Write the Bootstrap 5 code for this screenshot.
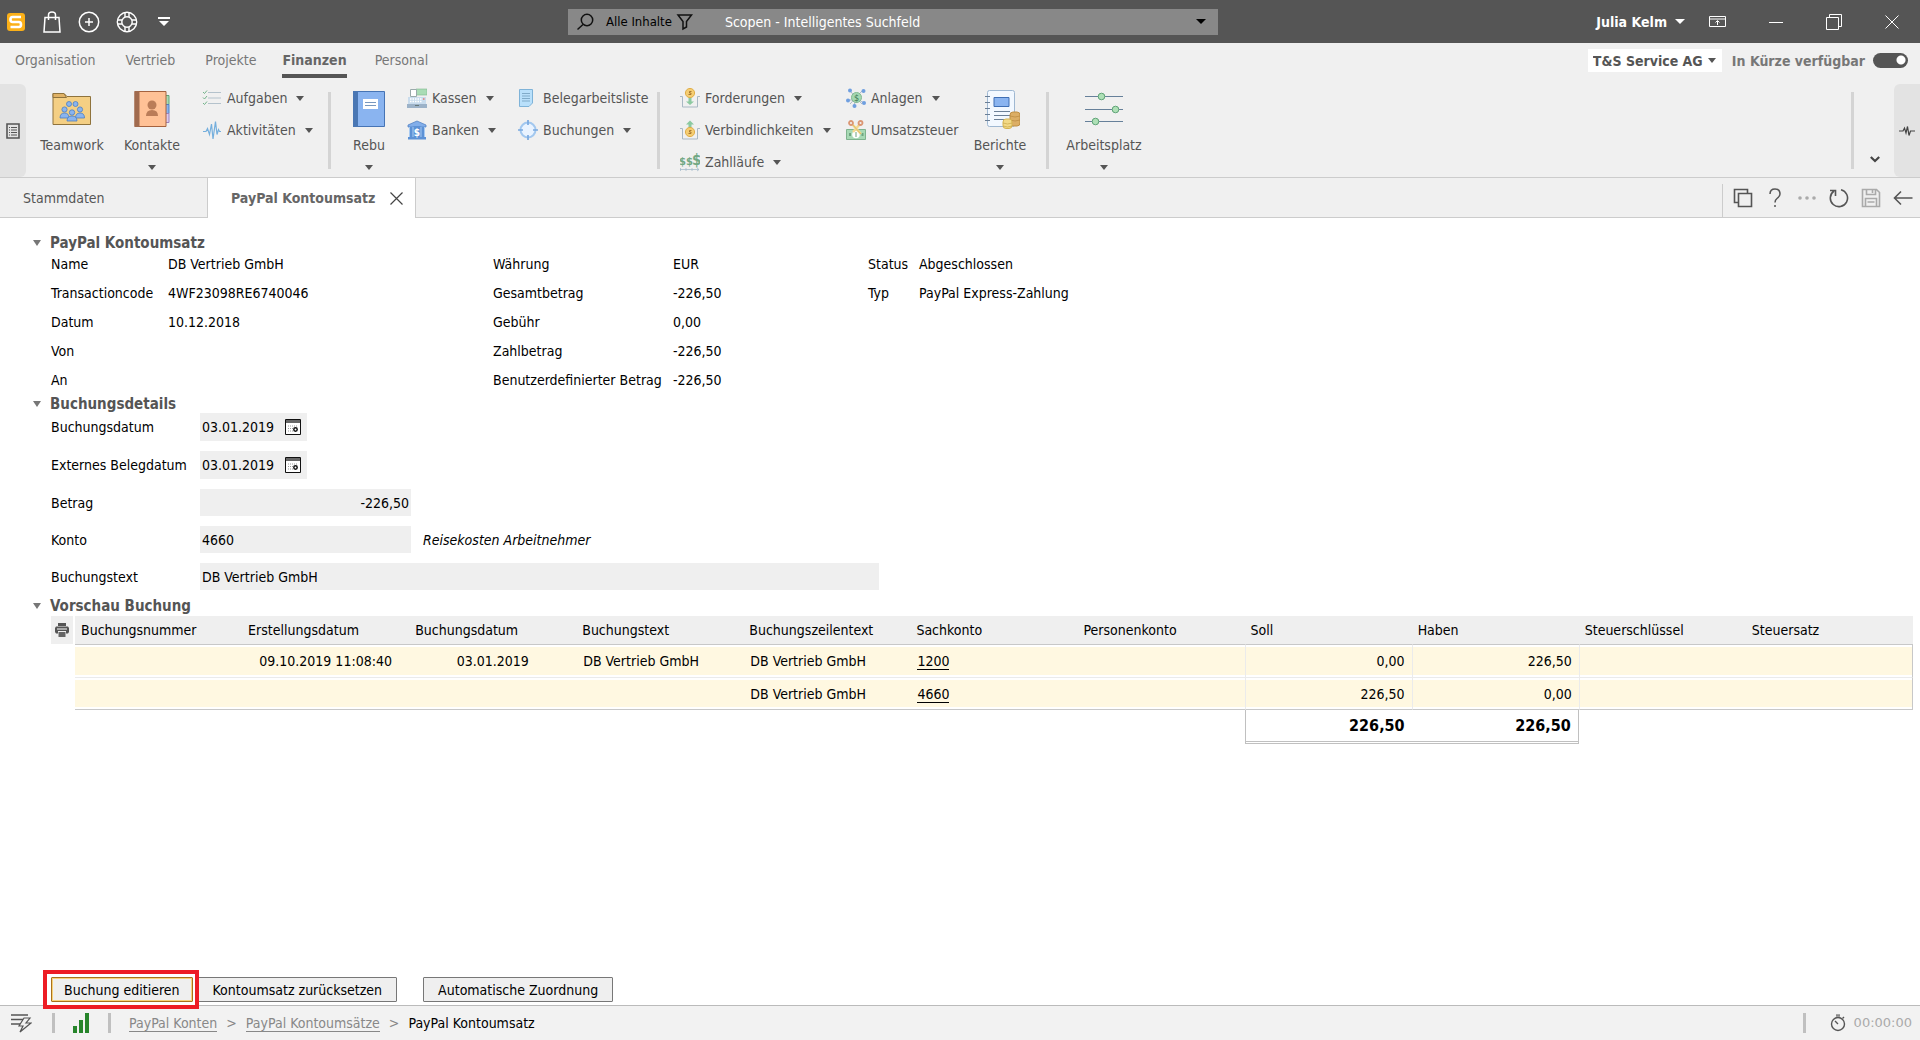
<!DOCTYPE html>
<html lang="de">
<head>
<meta charset="utf-8">
<meta name="viewport" content="width=device-width, initial-scale=1">
<title>PayPal Kontoumsatz</title>
<link href="https://cdn.jsdelivr.net/npm/bootstrap@5.3.0/dist/css/bootstrap.min.css" rel="stylesheet">
<style>
body{font-family:"DejaVu Sans Condensed","Noto Sans",sans-serif;font-size:14px;line-height:20px;color:#000;background:#fff}
button,input,select{font:inherit;color:inherit;border:0;background:none;padding:0}
svg{display:block;flex:none}
.bare{display:flex;align-items:center;justify-content:center}
.tri{width:0;height:0;border:4px solid transparent;border-top:5px solid currentColor;border-bottom:0;flex:none}
.titlebar{height:43px;background:#555;color:#fff}
.titlebar .tri{border-width:5px 5px 0}
.quick{gap:16px;padding-left:6px;flex:0 1 568px}
.search{width:650px;height:26px;background:#888;color:#000}
.search button{font-size:13px}
.search input::placeholder{color:#fff;opacity:1}
.search input{outline:0;margin-left:31px}
.wintools{flex:1 1 0;gap:43px;padding-right:21px}
.ribbon-area{background:#f0f0f0;color:#555}
.menurow{height:41px}
.menurow .nav{gap:30px;padding-left:15px}
.menurow .nav-link{padding:7px 0 0;height:35px;color:#777}
.menurow .nav-link.active{color:#666;font-weight:700;border-bottom:4px solid #555;margin:0 -2px 0 -4px}
.orgbox{padding-top:6px}
.company{background:#fff;height:23px;padding-left:5px;width:134px}
.company select{appearance:none;font-weight:700;width:115px;outline:0}
.soon{color:#777;font-weight:700;margin-left:10px}
.soon input{appearance:none;width:35px;height:15px;border-radius:8px;background:radial-gradient(circle at 28px 7px,#fff 4px,#555 5px);margin:0 12px 0 8px}
.ribbon{height:93px}
.sidegrip{width:26px;background:#e3e3e3;border-radius:0 6px 6px 0}
.sidegrip.end{border-radius:6px 0 0 6px}
.bigbtn{width:76px;display:flex;flex-direction:column;align-items:center;padding-top:5px;white-space:nowrap}
.bigbtn svg{margin-bottom:6px}
.bigbtn .tri{margin-top:10px}
.bigbtn.wide{width:84px}.bigbtn.widest{width:110px}
.smallcol{display:flex;flex-direction:column;gap:4px;flex:none}
.smallcol button{height:28px;display:flex;align-items:center;gap:5px;white-space:nowrap}
.smallcol .tri{margin-left:4px}
.vsep{width:3px;height:77px;margin-top:8px;background:#d4d4d4;flex:none}
.w-a{width:130px}.w-b{width:111px}.w-c{width:139px}.w-d{width:166px}.w-e{width:116px}
.expander{margin:0 14px 12px 16px}
.tabrow{height:41px;border-top:1px solid #ccc;border-bottom:1px solid #ccc}
.doctab{width:208px;color:#555;padding-left:23px;text-align:left;border-right:1px solid #ccc}
.doctab.open{background:#fff;margin-bottom:-1px;color:#666;font-weight:700}
.tabtools{border-left:1px solid #ccc;margin-top:6px;padding:0 7px 6px 10px;gap:12px}
.content{padding:15px 7px 0 33px}
.sect{height:16px;padding-top:4px;color:#555;font-weight:700;gap:8px;display:flex;align-items:center;font-size:15px}
.sect .tri{border-width:6px 4px 0;color:#777;margin-right:1px}
.facts{padding-left:18px}
.facts dl{display:grid;grid-auto-rows:29px;align-items:center;margin:0}
.facts dt{font-weight:400}.facts dd{margin:0}
.f1{grid-template-columns:117px 325px}.f2{grid-template-columns:180px 195px}.f3{grid-template-columns:51px auto}
.form-lines{padding:3px 0 6px 18px;display:flex;flex-direction:column;gap:10px}
.form-lines>div{display:flex;align-items:center}
.form-lines label{width:149px}
.form-lines input{background:#efefef;height:27px;padding:0 2px;outline:0}
.datebox{background:#efefef;width:107px;height:28px;display:flex;align-items:center;justify-content:space-between;padding-right:6px}
.form-lines .datebox input{width:83px}
.w-amt{width:211px}.w-txt{width:679px}
.printcell{width:22px;height:28px;background:#efefef;margin-right:2px}
.booktable{table-layout:fixed;width:100%;border-collapse:separate;border-spacing:0}
.booktable th{background:#efefef;font-weight:400;height:28px;padding:0 6px}
.booktable td{padding:0 7px}
.booktable tbody td{height:33px;border-top:1px solid #ebebeb;box-shadow:inset 0 2px #fff,inset 0 -2px #fff;background:#fff8e1}
.booktable tbody tr:first-child td{border-top-color:#c8c8c8}
.booktable tbody tr:last-child td{border-bottom:1px solid #c8c8c8}
.booktable tbody td:last-child{border-right:1px solid #c8c8c8}
.booktable tbody .sum,.booktable tbody .sum+.sum+td{border-left:1px solid #ebebeb}
.booktable tfoot .sum{height:34px;font-size:16px;font-weight:700;border-bottom:3px double #c0c0c0}
.booktable tfoot .sum:not(.sum+.sum){border-left:1px solid #c0c0c0}
.booktable tfoot .sum+.sum{border-right:1px solid #c0c0c0}
.booktable a{color:#000;text-decoration:none;border-bottom:1px solid #000}
.actions{padding:0 51px 3px;gap:2px}
.actions button{height:25px;padding:0 14px;border:1px solid #777;background:#efefef;border-radius:1px}
.marked{outline:4px solid #ed1c24;padding:3px 2px 3px 4px;margin:-3px 1px -3px -4px;position:relative}
.actions .marked button{padding:0 12px;border-color:#a9711c;box-shadow:inset 0 0 0 1px #f7d27a}
.statusbar{height:35px;border-top:1px solid #bbb;background:#f2f2f2;color:#888}
.statusbar a{color:#888;text-decoration:none;border-bottom:1px solid #888;line-height:16px}
.barsep{width:3px;height:20px;background:#c0c0c0}
.crumbs{gap:9px;margin-left:18px}
.clock{font-family:"DejaVu Sans",sans-serif;font-size:13px;color:#aaa}
</style>
</head>
<body class="d-flex flex-column min-vh-100">
<header>
<div class="titlebar d-flex align-items-center">
  <div class="quick d-flex align-items-center">
    <svg width="20" height="20" viewBox="0 0 20 20"><rect x="1" y="1" width="18" height="18" rx="3" fill="#fbb018"/><path d="M15 5H6.500Q4.500 5 4.500 7.500T6.500 10H13q2 0 2 2.500T13 15H4.500" fill="none" stroke="#fff" stroke-width="2.600"/></svg>
    <button class="bare" aria-label="Shop"><svg width="20" height="22" viewBox="0 0 20 22" fill="none" stroke="#fff" stroke-width="1.500"><path d="M3 6.500h14l1 14.500H2zM6.500 9V4q0-3 3.500-3t3.500 3v5"/></svg></button>
    <button class="bare" aria-label="Neu"><svg width="22" height="22" viewBox="0 0 22 22" fill="none" stroke="#fff" stroke-width="1.500"><circle cx="11" cy="11" r="9.700"/><path d="M11 7v8M7 11h8"/></svg></button>
    <button class="bare" aria-label="Hilfe"><svg width="22" height="22" viewBox="0 0 22 22" fill="none" stroke="#fff" stroke-width="1.400"><circle cx="11" cy="11" r="9.700"/><circle cx="11" cy="11" r="5.200"/><path d="M9 1.500v4.500m4-4.500v4.500M9 16v4.500m4-4.500v4.500M1.500 9H6m-4.500 4H6M16 9h4.500M16 13h4.500"/></svg></button>
    <button class="bare" aria-label="Mehr"><svg width="20" height="12" viewBox="0 0 20 12" fill="#fff"><path d="M4 1h12v2H4zM5 5h10l-5 5z"/></svg></button>
  </div>
  <div class="search d-flex align-items-center">
    <svg class="ms-2" width="18" height="18" viewBox="0 0 18 18" fill="none" stroke="#111" stroke-width="1.500"><circle cx="11" cy="7" r="5.700"/><path d="M7 11.500L1.500 16.500"/></svg>
    <button class="bare ms-2 ps-1">Alle Inhalte<svg class="ms-1" width="18" height="18" viewBox="0 0 18 18" fill="none" stroke="#111" stroke-width="1.500"><path d="M2 2h13.500L10.500 8.500V14L7 16V8.500z"/></svg></button>
    <input class="flex-grow-1" type="text" placeholder="Scopen - Intelligentes Suchfeld" aria-label="Suche">
    <button class="bare me-2 pe-1" aria-label="Suchverlauf"><span class="tri"></span></button>
  </div>
  <div class="wintools d-flex align-items-center justify-content-end">
    <div class="d-flex align-items-center">
      <button class="bare fw-bold gap-2">Julia Kelm <span class="tri"></span></button>
      <button class="bare ms-4" aria-label="Menüband"><svg width="17" height="12" viewBox="0 0 17 12" fill="none" stroke="#fff" stroke-width="1"><path d="M.5.5h16v10H.5zM.5 3h16M8.500 9V5M6.500 6.500l2-2 2 2"/></svg></button>
    </div>
    <button class="bare" aria-label="Minimieren"><svg width="14" height="14" viewBox="0 0 14 14"><path d="M0 7.500h14" stroke="#fff"/></svg></button>
    <button class="bare" aria-label="Wiederherstellen"><svg width="16" height="16" viewBox="0 0 16 16" fill="none" stroke="#fff"><path d="M.5 3.500h12v12H.5zM3.500 3.500v-3h12v12h-3"/></svg></button>
    <button class="bare" aria-label="Schließen"><svg width="14" height="14" viewBox="0 0 14 14"><path d="M.5.5l13 13m0-13l-13 13" stroke="#fff"/></svg></button>
  </div>
</div>
<div class="ribbon-area">
  <div class="menurow d-flex">
    <nav class="nav flex-grow-1">
      <a class="nav-link" href="#">Organisation</a><a class="nav-link" href="#">Vertrieb</a><a class="nav-link" href="#">Projekte</a><a class="nav-link active" href="#">Finanzen</a><a class="nav-link" href="#">Personal</a>
    </nav>
    <div class="orgbox d-flex align-items-center align-self-start">
      <div class="company d-flex align-items-center"><select aria-label="Firma"><option>T&amp;S Service AG</option></select><span class="tri"></span></div>
      <label class="soon d-flex align-items-center">In Kürze verfügbar <input type="checkbox" role="switch" checked></label>
    </div>
  </div>
  <div class="ribbon d-flex">
    <button class="sidegrip bare me-1" aria-label="Navigation"><svg width="14" height="16" viewBox="0 0 14 16" fill="none" stroke="#555"><path d="M1 1h12v14H1z" stroke-width="1.600"/><path d="M5 4.500h6M5 7h6M5 9.500h6M5 12h6"/><path d="M3 4.500h1M3 7h1M3 9.500h1M3 12h1" /></svg></button>
    <button class="bigbtn wide"><svg width="40" height="40" viewBox="0 0 40 40"><path d="M1 4.500h11l3 3h23.500v28H1z" fill="#f4cf84" stroke="#8f733c"/><path d="M1 4.500h11l2.500 4H1z" fill="#e0b266" stroke="#8f733c"/><g fill="#8ab4ee" stroke="#4d7fc0" stroke-width=".8"><circle cx="17" cy="15" r="2.500"/><circle cx="23.500" cy="15" r="2.500"/><circle cx="12.500" cy="20.500" r="2.600"/><circle cx="28" cy="20.500" r="2.600"/><path d="M8 29q0-5 4.500-5t4.500 5zM23.500 29q0-5 4.500-5t4.500 5z"/><circle cx="20" cy="23.500" r="2.700"/><path d="M15 32q0-5 5-5t5 5z"/></g></svg>Teamwork</button>
    <button class="bigbtn"><svg width="40" height="40" viewBox="0 0 40 40"><path d="M33 6.500h4v9h-4z" fill="#a9dcb5" stroke="#5fa377"/><path d="M33 15.500h4v9h-4z" fill="#8ab4ee" stroke="#4d7fc0"/><path d="M33 24.500h4v9h-4z" fill="#dccbf0" stroke="#9a80bb"/><path d="M3 2.500h31v35H3z" fill="#ffc196" stroke="#a5623f"/><path d="M2.500 2h5v36h-5z" fill="#a06a4e"/><circle cx="20" cy="16" r="4.500" fill="#ba7c58"/><path d="M14 27q0-6 6-6t6 6z" fill="#ba7c58"/></svg>Kontakte<span class="tri"></span></button>
    <div class="smallcol w-a ms-2 ps-1">
      <button><svg width="20" height="20" viewBox="0 0 20 20" fill="none"><path d="M6 4.500h13M6 10h13M6 15.500h13" stroke="#b4c2cc"/><path d="M1 4l1.500 1.500L5 2.500M1 9.500L2.500 11 5 8M1 15l1.500 1.500L5 13.500" stroke="#73b38a"/></svg>Aufgaben <span class="tri"></span></button>
      <button><svg width="20" height="20" viewBox="0 0 20 20" fill="none" stroke="#75afdd" stroke-width="1.200"><path d="M1 11.500h3l1.500-3 2 6L9.500 4l1.500 15L13.500 1.500l1.500 13 1.500-5 1 2H19"/></svg>Aktivitäten <span class="tri"></span></button>
    </div>
    <div class="vsep"></div>
    <button class="bigbtn"><svg width="40" height="40" viewBox="0 0 40 40"><path d="M4.500 2.500h31v35h-31z" fill="#8ab4f0" stroke="#4674b5"/><path d="M4 2h5v36H4z" fill="#4a77b4"/><path d="M14 10h15v10H14z" fill="#fff"/><path d="M16 13.500h11M16 16.500h11" stroke="#7898bf"/></svg>Rebu<span class="tri"></span></button>
    <div class="smallcol w-b">
      <button><svg width="20" height="20" viewBox="0 0 20 20"><path d="M9 1h11v6H9z" fill="#a9dcb5" stroke="#7fb98e" stroke-width=".6"/><path d="M1 9h18v10H1z" fill="#c9dced"/><path d="M0 16h20v4H0z" fill="#9cb2c8"/><path d="M3.500 1.500h6v7h-6z" fill="#fff" stroke="#9aa"/><path d="M3 11h12M3 13.500h12" stroke="#fff" stroke-width="1.500" stroke-dasharray="1.500 1"/><path d="M16 11h1.500" stroke="#e5766d" stroke-width="1.500"/><path d="M8 17.500h4" stroke="#677"/></svg>Kassen <span class="tri"></span></button>
      <button><svg width="20" height="20" viewBox="0 0 20 20"><path d="M1 5l9-4 9 4v2H1z" fill="#82aeea" stroke="#5483c4" stroke-width=".8"/><path d="M2 7h16v10H2z" fill="#a9cbf2"/><path d="M3 7h2.500v10H3zM14.500 7H17v10h-2.500zM1 17h18v2.500H1zM6.500 6h7v12h-7z" fill="#5d92d6"/><text x="10" y="16" font-size="10" fill="#fff" text-anchor="middle" font-weight="bold">$</text></svg>Banken <span class="tri"></span></button>
    </div>
    <div class="smallcol w-c">
      <button><svg width="20" height="20" viewBox="0 0 20 20"><path d="M1.500 1.500h13V15L11 18.500H1.500z" fill="#b9e0fb" stroke="#7fb3d8"/><path d="M4 5.500h8M4 8h8M4 10.500h8M4 13h8" stroke="#80abc9"/></svg>Belegarbeitsliste</button>
      <button><svg width="20" height="20" viewBox="0 0 20 20" fill="none" stroke="#79a9e0"><circle cx="10" cy="10" r="7.500" fill="#e9f3ff" stroke="#a3c8ef" stroke-width="2"/><path d="M10 0v5M10 15v5M0 10h5M15 10h5" stroke-width="1.700"/></svg>Buchungen <span class="tri"></span></button>
    </div>
    <div class="vsep me-3"></div>
    <div class="smallcol w-d ms-1">
      <button><svg width="20" height="20" viewBox="0 0 20 20"><path d="M0 8.500h2.500v10.500h15V8.500H20" fill="none" stroke="#a9b8c4"/><path d="M8.500 9h3v4.500H14L10 17l-4-3.500h2.500z" fill="#8cc9a0"/><circle cx="10" cy="5" r="4.600" fill="#f5cd72" stroke="#e0ae48"/><path d="M11.500 3.500H9.500v1.500h1.500v1.500H8.500" fill="none" stroke="#a06f28" stroke-width=".9"/></svg>Forderungen <span class="tri"></span></button>
      <button><svg width="20" height="20" viewBox="0 0 20 20"><path d="M0 8.500h2.500v10.500h15V8.500H20" fill="none" stroke="#a9b8c4"/><path d="M8.500 8V4.500H6L10 .5l4 4h-2.500V8z" fill="#8cc9a0"/><circle cx="10" cy="12" r="4.600" fill="#f5cd72" stroke="#e0ae48"/><path d="M11.500 10.500H9.500V12h1.500v1.500H8.500" fill="none" stroke="#a06f28" stroke-width=".9"/></svg>Verbindlichkeiten <span class="tri"></span></button>
      <button><svg width="20" height="20" viewBox="0 0 20 20"><g fill="#72a884" font-weight="bold"><text x="-1" y="13" font-size="11">$$</text><text x="12" y="13" font-size="15">$</text></g><path d="M0 17.500h19M.5 16v3M6 16v3M12 16v3M17 16l2 1.500-2 1.500" stroke="#a7bccb" fill="none" stroke-width=".8"/></svg>Zahlläufe <span class="tri"></span></button>
    </div>
    <div class="smallcol w-e">
      <button><svg width="20" height="20" viewBox="0 0 20 20"><path d="M4 3l12 13M16 3L4 16M2 12h6M10 10l-2 8M10 10l8 5" stroke="#9ab" stroke-width=".8"/><g fill="#6f9fe0"><circle cx="4" cy="2.500" r="2"/><circle cx="17.500" cy="3" r="2"/><circle cx="2" cy="12.500" r="2"/><circle cx="8.500" cy="18" r="2"/><circle cx="18" cy="15" r="2"/></g><circle cx="10.500" cy="9.500" r="5" fill="#a5d8b2" stroke="#82b991"/><text x="10.500" y="13" text-anchor="middle" font-size="9" fill="#3e7a54">$</text></svg>Anlagen <span class="tri"></span></button>
      <button><svg width="20" height="20" viewBox="0 0 20 20"><path d="M.5 9.500h19v10H.5z" fill="#a7d9b4" stroke="#7fb38e"/><circle cx="10" cy="14.500" r="3.800" fill="#fff"/><path d="M3 13h2v3H3zM15.500 13h2v3h-2zM9.500 12h1v5h-1z" fill="#6fa480"/><path d="M6 4l9 10M14 4L7 12" stroke="#f3d890" stroke-width="2.500"/><path d="M6 4l9 10" stroke="#cfa74f" stroke-width=".6"/><g fill="none" stroke="#db9673" stroke-width="1.800"><circle cx="5" cy="3" r="2"/><circle cx="14.500" cy="3" r="2"/></g></svg>Umsatzsteuer</button>
    </div>
    <button class="bigbtn me-2"><svg width="40" height="40" viewBox="0 0 40 40"><rect x="7.500" y="1.500" width="27" height="36" rx="2" fill="#f2f8ff" stroke="#9fb8d2"/><path d="M5 7.500h5M5 13.500h5M5 19.500h5M5 25.500h5M5 31.500h5M14 22.500h16M14 26.500h16M14 30.500h11" stroke="#6b7f96"/><path d="M14 8.500h15v9H14z" fill="#8ab4f0" stroke="#3f6fb4"/><rect x="30" y="23" width="10" height="14" rx="3" fill="#dcae65" stroke="#c09045"/><path d="M30 27q5 2 10 0M30 31q5 2 10 0" fill="none" stroke="#b98a41" stroke-width=".7"/><rect x="23" y="30" width="9" height="9.500" rx="3" fill="#f2d986" stroke="#d5b453"/><path d="M23 34q4.500 2 9 0M23 37q4.500 2 9 0" fill="none" stroke="#c9a648" stroke-width=".7"/></svg>Berichte<span class="tri"></span></button>
    <div class="vsep"></div>
    <button class="bigbtn widest"><svg width="40" height="40" viewBox="0 0 40 40"><path d="M1 7.500h38M1 20.500h38M1 32.500h38" stroke="#66809a"/><g fill="#aee0b6" stroke="#5fa377"><circle cx="17.500" cy="7.500" r="3.300"/><circle cx="31.500" cy="20.500" r="3.300"/><circle cx="11.500" cy="32.500" r="3.300"/></g></svg>Arbeitsplatz<span class="tri"></span></button>
    <div class="vsep ms-auto"></div>
    <button class="bare expander align-self-end" aria-label="Aufklappen"><svg width="10" height="9" viewBox="0 0 10 9" fill="none" stroke="#444" stroke-width="2.200"><path d="M.8 1L5 5 9.200 1"/></svg></button>
    <button class="sidegrip end bare" aria-label="Aktivität"><svg width="16" height="12" viewBox="0 0 16 12" fill="none" stroke="#444" stroke-width="1.200"><path d="M0 6h4l1.500-3L7 8 8.500 1.500 10 10.500 11.500 6H16"/></svg></button>
  </div>
  <div class="tabrow d-flex">
    <button class="doctab">Stammdaten</button>
    <div class="doctab open d-flex align-items-center"><span class="flex-grow-1">PayPal Kontoumsatz</span><button class="bare me-2 pe-1" aria-label="Tab schließen"><svg width="13" height="13" viewBox="0 0 13 13"><path d="M.5.5l12 12m0-12l-12 12" stroke="#444" stroke-width="1.200"/></svg></button></div>
    <div class="tabtools d-flex align-items-center ms-auto">
      <button class="bare" aria-label="Kopieren"><svg width="20" height="20" viewBox="0 0 20 20" fill="none" stroke="#555" stroke-width="1.600"><path d="M5.500 5.500h13v13h-13zM5 14.500H1.500v-13h13V5"/></svg></button>
      <button class="bare" aria-label="Hilfe"><svg width="20" height="20" viewBox="0 0 20 20" fill="none" stroke="#555" stroke-width="1.500"><path d="M5 6q0-5 5-5t5 5q0 2.500-3 4.500-2 1.500-2 4M10 17v2"/></svg></button>
      <button class="bare" aria-label="Mehr"><svg width="20" height="20" viewBox="0 0 20 20" fill="#aaa"><circle cx="3" cy="10" r="1.800"/><circle cx="10" cy="10" r="1.800"/><circle cx="17" cy="10" r="1.800"/></svg></button>
      <button class="bare" aria-label="Aktualisieren"><svg width="20" height="20" viewBox="0 0 20 20" fill="none" stroke="#555" stroke-width="1.600"><path d="M5 3a8.600 8.600 0 1 0 7-1.300M1 2.500h5.500V8"/></svg></button>
      <button class="bare" aria-label="Speichern"><svg width="20" height="20" viewBox="0 0 20 20" fill="none" stroke="#aaa" stroke-width="1.600"><path d="M1.500 1.500h14l3 3v14h-17zM5.500 1.500v5h9v-5M4.500 18V10.500h11V18M11.500 2v3M6.500 14h7"/></svg></button>
      <button class="bare" aria-label="Zurück"><svg width="20" height="20" viewBox="0 0 20 20" fill="none" stroke="#555" stroke-width="1.600"><path d="M19.500 10H2M8 3.500L1.500 10 8 16.500"/></svg></button>
    </div>
  </div>
</div>
</header>
<main class="content flex-grow-1">
  <button class="sect"><span class="tri"></span>PayPal Kontoumsatz</button>
  <div class="facts d-flex align-items-start">
    <dl class="f1"><dt>Name</dt><dd>DB Vertrieb GmbH</dd><dt>Transactioncode</dt><dd>4WF23098RE6740046</dd><dt>Datum</dt><dd>10.12.2018</dd><dt>Von</dt><dd></dd><dt>An</dt><dd></dd></dl>
    <dl class="f2"><dt>Währung</dt><dd>EUR</dd><dt>Gesamtbetrag</dt><dd>-226,50</dd><dt>Gebühr</dt><dd>0,00</dd><dt>Zahlbetrag</dt><dd>-226,50</dd><dt>Benutzerdefinierter Betrag</dt><dd>-226,50</dd></dl>
    <dl class="f3"><dt>Status</dt><dd>Abgeschlossen</dd><dt>Typ</dt><dd>PayPal Express-Zahlung</dd></dl>
  </div>
  <button class="sect"><span class="tri"></span>Buchungsdetails</button>
  <div class="form-lines">
    <div><label for="bd">Buchungsdatum</label><span class="datebox"><input id="bd" value="03.01.2019"><button class="bare" aria-label="Kalender"><svg width="16" height="16" viewBox="0 0 16 16"><path d="M.5.5h15v15H.5z" fill="#fff" stroke="#111"/><path d="M1 1h14v3H1z" fill="#666"/><path d="M3 7h10M3 9.500h5M3 12h5" stroke="#999" stroke-dasharray="1 1"/><circle cx="10.500" cy="10.500" r="1.700" fill="none" stroke="#111" stroke-width="1.500"/></svg></button></span></div>
    <div><label for="eb">Externes Belegdatum</label><span class="datebox"><input id="eb" value="03.01.2019"><button class="bare" aria-label="Kalender"><svg width="16" height="16" viewBox="0 0 16 16"><path d="M.5.5h15v15H.5z" fill="#fff" stroke="#111"/><path d="M1 1h14v3H1z" fill="#666"/><path d="M3 7h10M3 9.500h5M3 12h5" stroke="#999" stroke-dasharray="1 1"/><circle cx="10.500" cy="10.500" r="1.700" fill="none" stroke="#111" stroke-width="1.500"/></svg></button></span></div>
    <div><label for="be">Betrag</label><input id="be" class="w-amt text-end" value="-226,50"></div>
    <div><label for="ko">Konto</label><input id="ko" class="w-amt" value="4660"><em class="ms-2 ps-1">Reisekosten Arbeitnehmer</em></div>
    <div><label for="bt">Buchungstext</label><input id="bt" class="w-txt" value="DB Vertrieb GmbH"></div>
  </div>
  <button class="sect mb-1"><span class="tri"></span>Vorschau Buchung</button>
  <div class="facts d-flex align-items-start">
    <button class="printcell bare flex-shrink-0" aria-label="Drucken"><svg width="16" height="16" viewBox="0 0 16 16"><path d="M4 1h8v3H4z" fill="#555"/><path d="M2 4.500h12l1 1.500v4l-1 1.500h-2V9H4v2.500H2L1 10V6z" fill="#555"/><path d="M3 7h10" stroke="#fff"/><path d="M4.500 10h7v5h-7z" fill="#666"/></svg></button>
    <table class="booktable">
      <thead><tr><th>Buchungsnummer</th><th>Erstellungsdatum</th><th>Buchungsdatum</th><th>Buchungstext</th><th>Buchungszeilentext</th><th>Sachkonto</th><th>Personenkonto</th><th>Soll</th><th>Haben</th><th>Steuerschlüssel</th><th>Steuersatz</th></tr></thead>
      <tbody>
        <tr><td></td><td class="text-center">09.10.2019 11:08:40</td><td class="text-center">03.01.2019</td><td>DB Vertrieb GmbH</td><td>DB Vertrieb GmbH</td><td><a href="#">1200</a></td><td></td><td class="sum text-end">0,00</td><td class="sum text-end">226,50</td><td></td><td></td></tr>
        <tr><td></td><td></td><td></td><td></td><td>DB Vertrieb GmbH</td><td><a href="#">4660</a></td><td></td><td class="sum text-end">226,50</td><td class="sum text-end">0,00</td><td></td><td></td></tr>
      </tbody>
      <tfoot><tr><td colspan="7"></td><td class="sum text-end">226,50</td><td class="sum text-end">226,50</td><td></td><td></td></tr></tfoot>
    </table>
  </div>
</main>
<div class="actions d-flex align-items-center">
  <div class="marked"><button>Buchung editieren</button></div>
  <button>Kontoumsatz zurücksetzen</button>
  <button class="ms-4">Automatische Zuordnung</button>
</div>
<footer class="statusbar d-flex align-items-center">
  <svg class="ms-2 me-3" width="24" height="22" viewBox="0 0 24 22" fill="none" stroke="#555" stroke-width="1.500"><path d="M3 3h17M3 7.500h12M3 12h9"/><path d="M16 6h6l-4 5h5L12 20l3-6h-4z" stroke-width="1.200"/></svg>
  <span class="barsep ms-1"></span>
  <svg class="ms-3 me-3" width="21" height="20" viewBox="0 0 21 20" fill="#27852b"><path d="M2 13h4v7H2zM8 7h4v13H8zM14 0h4v20h-4z"/></svg>
  <span class="barsep"></span>
  <nav class="crumbs d-flex align-items-center"><a href="#">PayPal Konten</a><span>&gt;</span><a href="#">PayPal Kontoumsätze</a><span>&gt;</span><span class="text-black">PayPal Kontoumsatz</span></nav>
  <span class="barsep ms-auto me-4"></span>
  <svg class="me-2" width="16" height="18" viewBox="0 0 16 18" fill="none" stroke="#555" stroke-width="1.400"><circle cx="8" cy="10" r="6.500"/><path d="M8 10L5 7M12.500 4.500L14 3"/><path d="M6 1.500h4" stroke-width="2.500" stroke="#888"/></svg>
  <span class="clock me-2">00:00:00</span>
</footer>
<script src="https://cdn.jsdelivr.net/npm/bootstrap@5.3.0/dist/js/bootstrap.bundle.min.js"></script>
</body>
</html>
